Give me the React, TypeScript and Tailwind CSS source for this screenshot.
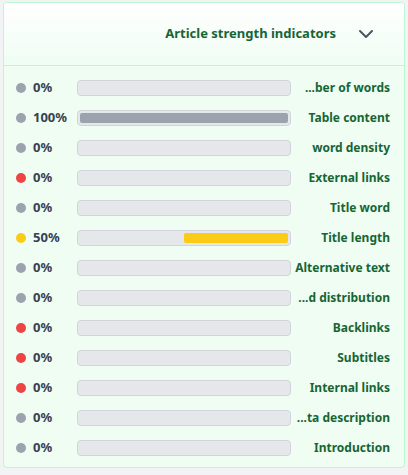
import React from "react";

type Row = { pct: number; color: "gray" | "red" | "yellow"; label: string };

const rows: Row[] = [
  { pct: 0, color: "gray", label: "...ber of words" },
  { pct: 100, color: "gray", label: "Table content" },
  { pct: 0, color: "gray", label: "word density" },
  { pct: 0, color: "red", label: "External links" },
  { pct: 0, color: "gray", label: "Title word" },
  { pct: 50, color: "yellow", label: "Title length" },
  { pct: 0, color: "gray", label: "Alternative text" },
  { pct: 0, color: "gray", label: "...d distribution" },
  { pct: 0, color: "red", label: "Backlinks" },
  { pct: 0, color: "red", label: "Subtitles" },
  { pct: 0, color: "red", label: "Internal links" },
  { pct: 0, color: "gray", label: "...ta description" },
  { pct: 0, color: "gray", label: "Introduction" },
];

const dotClass = {
  gray: "bg-[#9ca3af]",
  red: "bg-[#ef4444]",
  yellow: "bg-[#facc15]",
};

const IndicatorRow: React.FC<{ row: Row }> = ({ row }) => (
  <div className="flex items-center h-[30px] pl-[12px] pr-[14px]">
    <span className={`w-[10px] h-[10px] rounded-full shrink-0 ${dotClass[row.color]}`} />
    <span className="w-[44px] ml-[7px] text-[13px] font-bold text-[#374151] shrink-0">{row.pct}%</span>
    <div className="w-[214px] h-[16px] rounded-[4px] bg-[#e5e7eb] border border-[#d1d5db] p-[2px] flex justify-end shrink-0">
      {row.pct > 0 && (
        <div
          className={`h-full rounded-[2px] ${row.color === "yellow" ? "bg-[#facc15]" : "bg-[#9ca3af]"}`}
          style={{ width: `${row.pct}%` }}
        />
      )}
    </div>
    <span className="flex-1 text-right text-[12px] font-bold text-[#166534] whitespace-nowrap">{row.label}</span>
  </div>
);

export default function App() {
  return (
    <div className="w-[408px] h-[475px] bg-[#f1f3f5] pt-[2px] px-[3px]" style={{ fontFamily: '"Noto Sans", "Open Sans", sans-serif' }}>
      <div className="border border-[#bbf7d0] rounded-[4px] bg-[#effdf3] overflow-hidden">
        <div className="h-[63px] flex items-center justify-end pr-[26px] bg-gradient-to-b from-white to-[#effdf3] border-b border-[#bbf7d0]">
          <span className="text-[13px] font-bold text-[#166534]">Article strength indicators</span>
          <svg className="ml-[18px]" width="24" height="24" viewBox="0 0 24 24" fill="none" stroke="#4b5563" strokeWidth="2" strokeLinecap="round" strokeLinejoin="round">
            <path d="M6 9l6 6 6-6" />
          </svg>
        </div>
        <div className="pt-[7px] pb-[4px]">
          {rows.map((r, i) => (
            <IndicatorRow key={i} row={r} />
          ))}
        </div>
      </div>
    </div>
  );
}
